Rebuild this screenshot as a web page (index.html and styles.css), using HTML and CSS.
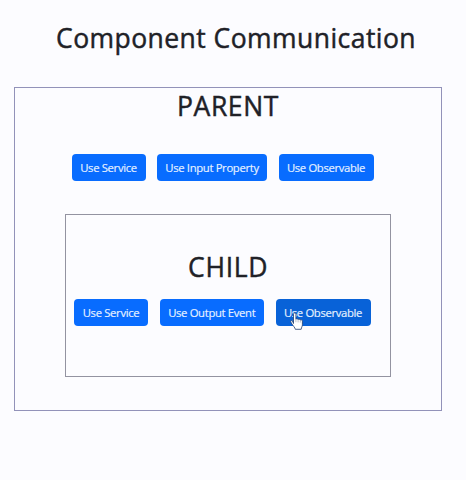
FILE: index.html
```html
<!DOCTYPE html>
<html lang="en">
<head>
<meta charset="utf-8">
<title>Component Communication</title>
<link rel="stylesheet" href="styles.css">
</head>
<body>
<h1 class="title">Component Communication</h1>
<section class="parent">
  <h2 class="parent-title">PARENT</h2>
  <div class="actions">
    <button class="btn service">Use Service</button>
    <button class="btn input">Use Input Property</button>
    <button class="btn observable">Use Observable</button>
  </div>
  <section class="child">
    <h2 class="child-title">CHILD</h2>
    <div class="actions">
      <button class="btn service">Use Service</button>
      <button class="btn output">Use Output Event</button>
      <button class="btn observable hovered">Use Observable
        <svg class="cursor" width="14" height="19" viewBox="0 0 14 19"><path d="M3.5 11.5V2.2c0-1.8 2.4-1.8 2.4 0v5c.5-.8 2-.6 2.2.4.6-.8 2-.5 2.2.5.8-.6 2.1-.1 2.1 1.1v3.6c0 1.6-1 2.4-1.2 4.5H5.3c-.1-1.6-2.2-3.4-3.3-5.2L.8 10c-.7-1.2.9-2 1.7-1z" fill="#fff" stroke="#25406f" stroke-width=".8" stroke-linejoin="round"/><path d="M5.9 7.2v3M8.1 7.6v2.8M10.3 8.1v2.5" stroke="#8d93a5" stroke-width=".6"/></svg>
      </button>
    </div>
  </section>
</section>
</body>
</html>
```
FILE: styles.css
```css
* { box-sizing: border-box; }
body {
  margin: 0;
  height: 480px;
  overflow: hidden;
  background: #fcfcff;
  color: #202127;
  font-family: "Open Sans", "Noto Sans", sans-serif;
}
h1, h2 {
  margin: 0;
  font-size: 26.5px;
  font-weight: 500;
  line-height: 36px;
  letter-spacing: .45px;
  -webkit-text-stroke: .45px #202127;
  white-space: nowrap;
}
.title {
  padding: 20px 0 0 56px;
  height: 87px;
}
.parent {
  width: 428px;
  height: 324px;
  margin-left: 14px;
  border: 1px solid #9292b9;
}
.parent-title { padding-left: 162px; height: 66px; letter-spacing: .6px; }
.actions { display: flex; gap: 11.5px; }
.parent > .actions { padding-left: 56.5px; }
.btn {
  position: relative;
  height: 27px;
  padding: 0;
  border: 0;
  border-radius: 4px;
  background: #086cff;
  color: #e7f2ff;
  font: 11.3px/27px "Open Sans", "Noto Sans", sans-serif;
  letter-spacing: -.34px;
  -webkit-text-stroke: .15px #e7f2ff;
  white-space: nowrap;
}
.service { width: 74px; }
.input { width: 110px; }
.output { width: 104.5px; }
.observable { width: 95px; }
.hovered { background: #0862d8; }
.child {
  width: 326px;
  height: 163px;
  margin: 33px 0 0 50px;
  border: 1px solid #9393a1;
}
.child-title { padding: 34px 0 0 122px; height: 84px; letter-spacing: .7px; }
.child > .actions { padding-left: 8px; }
.cursor { position: absolute; left: 14px; top: 13px; }
```
